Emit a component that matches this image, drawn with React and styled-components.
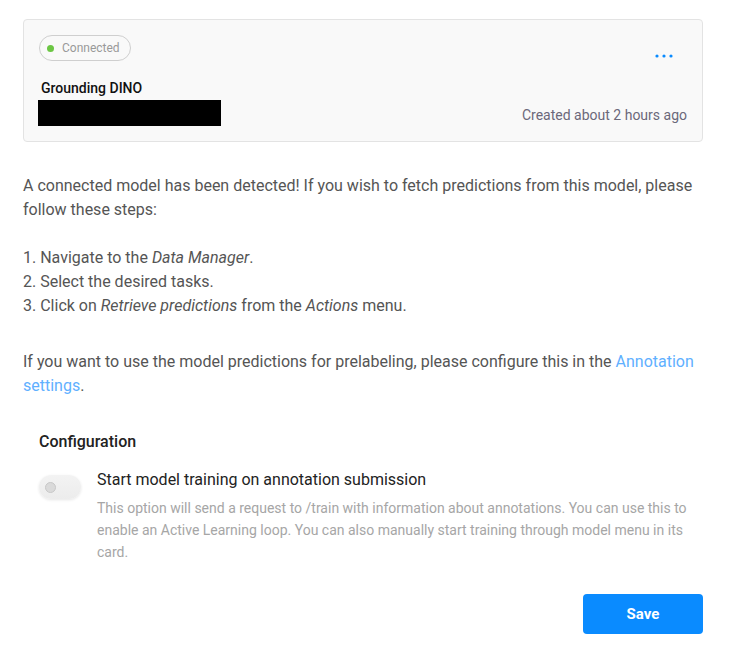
import React, { useState } from "react";
import styled, { createGlobalStyle } from "styled-components";

const GlobalStyle = createGlobalStyle`
  body {
    margin: 0;
    background: #fff;
    font-family: Roboto, "Liberation Sans", sans-serif;
  }
`;

const Page = styled.div`
  width: 680px;
  padding: 19px 37px 24px 23px;
`;

const Card = styled.div`
  background: #f9f9f9;
  border: 1px solid #e3e3e3;
  border-radius: 4px;
  padding: 15px;
  display: flex;
  flex-direction: column;
`;

const CardTop = styled.div`
  display: flex;
  justify-content: space-between;
  align-items: flex-start;
`;

const Badge = styled.div`
  display: inline-flex;
  align-items: center;
  gap: 8px;
  height: 24px;
  padding: 0 10px 0 7px;
  border: 1px solid #cfcfcf;
  border-radius: 13px;
  font-size: 12px;
  color: #999;
`;

const Dot = styled.span`
  width: 7px;
  height: 7px;
  border-radius: 50%;
  background: ${(p) => p.color};
`;

const MenuButton = styled.button`
  background: transparent;
  border: none;
  padding: 0;
  margin: 19px 14px 0 0;
  cursor: pointer;
  display: flex;
`;

const Name = styled.div`
  margin-top: 19px;
  padding-left: 2px;
  font-size: 14px;
  line-height: 16px;
  font-weight: 500;
  color: #111;
`;

const CardBottom = styled.div`
  margin-top: 4px;
  display: flex;
  justify-content: space-between;
  align-items: center;
`;

const Redacted = styled.div`
  width: 183px;
  height: 26px;
  background: #000;
  margin-left: -1px;
`;

const Created = styled.div`
  font-size: 14px;
  color: #6b687a;
  margin-top: 4px;
`;

const Text = styled.p`
  margin: ${(p) => p.margin || "0"};
  font-size: 16px;
  line-height: 24px;
  color: #555;
`;

const Link = styled.a`
  color: #5fb0ff;
  text-decoration: none;
`;

const Section = styled.div`
  margin-top: 33px;
  padding-left: 16px;
`;

const SectionTitle = styled.div`
  font-size: 16px;
  line-height: 22px;
  font-weight: 500;
  color: #222;
`;

const OptionRow = styled.div`
  display: flex;
  gap: 16px;
  margin-top: 16px;
`;

const Toggle = styled.button`
  flex: none;
  width: 42px;
  height: 24px;
  margin-top: 6px;
  border: none;
  border-radius: 12px;
  background: ${(p) => (p.on ? "#0a8bff" : "linear-gradient(180deg, #f3f3f3, #ececec)")};
  box-shadow: 0 1px 3px rgba(0, 0, 0, 0.1);
  position: relative;
  cursor: pointer;
  padding: 0;

  &::after {
    content: "";
    position: absolute;
    top: 7px;
    left: ${(p) => (p.on ? "25px" : "6px")};
    width: 9px;
    height: 9px;
    border-radius: 50%;
    border: 1px solid ${(p) => (p.on ? "#fff" : "#c8c8c8")};
    background: ${(p) => (p.on ? "#fff" : "#dadada")};
  }
`;

const OptionText = styled.div`
  display: flex;
  flex-direction: column;
`;

const OptionTitle = styled.div`
  font-size: 16px;
  line-height: 22px;
  color: #222;
`;

const OptionDesc = styled.div`
  margin-top: 6px;
  font-size: 14px;
  line-height: 22px;
  color: #a6a6a6;
`;

const Footer = styled.div`
  display: flex;
  justify-content: flex-end;
  margin-top: 31px;
`;

const SaveButton = styled.button`
  width: 120px;
  height: 40px;
  border: none;
  border-radius: 4px;
  background: #0a8bff;
  color: #fff;
  font-family: inherit;
  font-size: 15px;
  font-weight: 700;
  cursor: pointer;
`;

function DotsIcon() {
  return (
    <svg width="18" height="4" viewBox="0 0 18 4">
      <circle cx="2" cy="2" r="1.6" fill="#0a8bff" />
      <circle cx="9" cy="2" r="1.6" fill="#0a8bff" />
      <circle cx="16" cy="2" r="1.6" fill="#0a8bff" />
    </svg>
  );
}

export default function App() {
  const [autoTrain, setAutoTrain] = useState(false);

  return (
    <>
      <GlobalStyle />
      <Page>
        <Card>
          <CardTop>
            <Badge>
              <Dot color="#6cc644" />
              Connected
            </Badge>
            <MenuButton aria-label="Menu">
              <DotsIcon />
            </MenuButton>
          </CardTop>
          <Name>Grounding DINO</Name>
          <CardBottom>
            <Redacted />
            <Created>Created about 2 hours ago</Created>
          </CardBottom>
        </Card>

        <Text margin="32px 0 0">
          A connected model has been detected! If you wish to fetch predictions from this model, please
          follow these steps:
        </Text>
        <Text margin="24px 0 0">
          1. Navigate to the <em>Data Manager</em>.
          <br />
          2. Select the desired tasks.
          <br />
          3. Click on <em>Retrieve predictions</em> from the <em>Actions</em> menu.
        </Text>
        <Text margin="32px 0 0">
          If you want to use the model predictions for prelabeling, please configure this in the{" "}
          <Link href="#">Annotation settings</Link>.
        </Text>

        <Section>
          <SectionTitle>Configuration</SectionTitle>
          <OptionRow>
            <Toggle on={autoTrain ? 1 : 0} onClick={() => setAutoTrain(!autoTrain)} />
            <OptionText>
              <OptionTitle>Start model training on annotation submission</OptionTitle>
              <OptionDesc>
                This option will send a request to /train with information about annotations. You can use this to
                enable an Active Learning loop. You can also manually start training through model menu in its
                card.
              </OptionDesc>
            </OptionText>
          </OptionRow>
        </Section>

        <Footer>
          <SaveButton>Save</SaveButton>
        </Footer>
      </Page>
    </>
  );
}
